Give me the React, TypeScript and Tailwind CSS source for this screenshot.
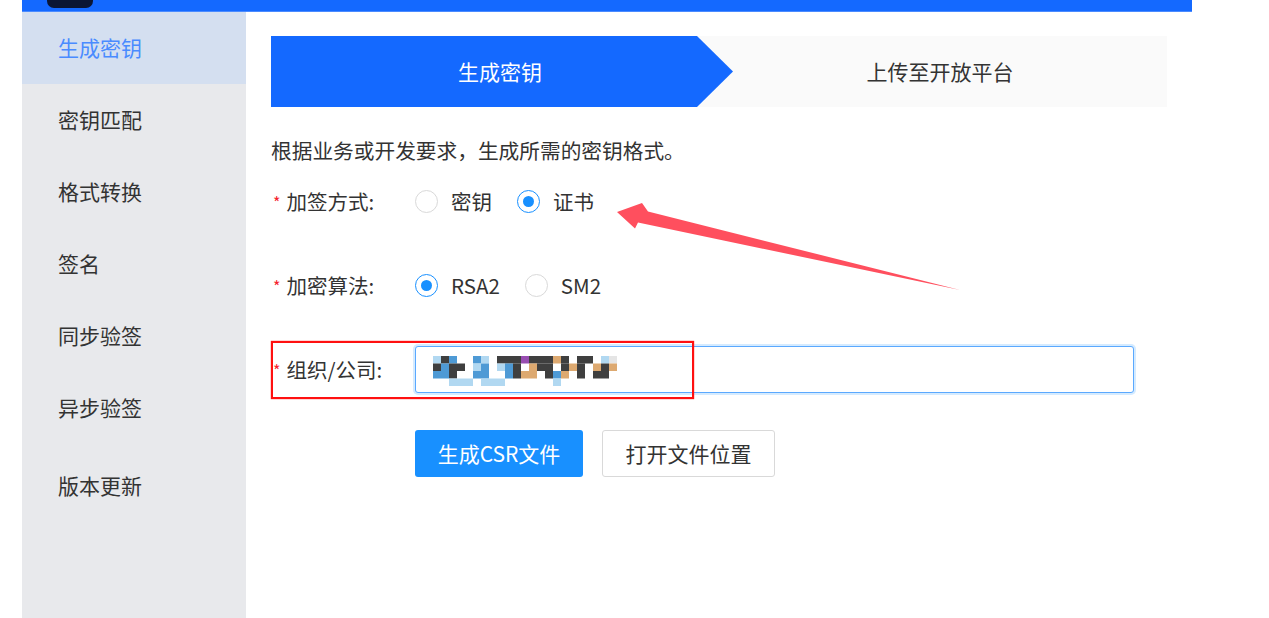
import { useState } from "react";

const menus = ["生成密钥", "密钥匹配", "格式转换", "签名", "同步验签", "异步验签", "版本更新"];

// 打码后的组织名，用小色块模拟
const mosaicRows = [
    "lkb..bl.kkkpkkkok.kk.lw.",
    "kbkk.lb.lbk.okk.kok.oko.",
    "bbk..bb..bkoo.kbo.k.kk..",
    "..lll.lll......l........",
];
const mosaicColors: Record<string, string> = {
    k: "#2a2a2a",
    b: "#3b8fd0",
    l: "#a8d4f0",
    o: "#d9a060",
    p: "#8d3aa8",
    w: "#e2e2e2",
};

function Radio({ checked, label }: { checked: boolean; label: string }) {
    return (
        <label className="flex items-center gap-[13px] cursor-pointer">
            <span
                className={
                    checked
                        ? "w-[23px] h-[23px] rounded-full border border-[#1890ff] bg-white flex items-center justify-center"
                        : "w-[23px] h-[23px] rounded-full border border-[#d9d9d9] bg-white"
                }
            >
                {checked && <span className="w-[11px] h-[11px] rounded-full bg-[#1890ff]" />}
            </span>
            <span className="text-[20.5px] text-[#333]">{label}</span>
        </label>
    );
}

function FormRow({ label, children }: { label: string; children: React.ReactNode }) {
    return (
        <div className="flex items-center h-[47px]">
            <div className="w-[144px] shrink-0 flex items-center text-[20.5px] text-[#333]">
                <span className="text-[#f5222d] text-[16px] ml-[2px] mr-[6px]">*</span>
                {label}
            </div>
            {children}
        </div>
    );
}

export default function App() {
    const [signType, setSignType] = useState("cert");
    const [algo, setAlgo] = useState("RSA2");

    return (
        <div className="relative w-[1269px] h-[618px] overflow-hidden bg-white font-['Microsoft_YaHei','Noto_Sans_CJK_SC',sans-serif]">
            {/* 顶部栏 */}
            <div className="relative ml-[22px] w-[1170px] h-[12px] bg-[#1469ff] border-b border-[#4b8bff]">
                <div className="absolute left-[25px] top-0 w-[46px] h-[8px] rounded-b-[7px] bg-[#0b1633]" />
            </div>

            <div className="flex ml-[22px] h-[606px]">
                {/* 左侧菜单 */}
                <aside className="w-[224px] shrink-0 bg-[#e8e9ec]">
                    {menus.map((m, i) => (
                        <div
                            key={m}
                            className={
                                i === 0
                                    ? "h-[72px] flex items-center pl-[36px] bg-[#d4dff0] text-[#4a8bff] text-[21px]"
                                    : i === 6
                                    ? "h-[72px] mt-[6px] flex items-center pl-[36px] text-[#333] text-[21px]"
                                    : "h-[72px] flex items-center pl-[36px] text-[#333] text-[21px]"
                            }
                        >
                            {m}
                        </div>
                    ))}
                </aside>

                {/* 主体 */}
                <main className="w-[946px] pl-[25px] pt-[24px]">
                    <div className="flex w-[896px] h-[71px] bg-[#fafafa]">
                        <div className="w-[462px] shrink-0 flex items-center justify-center pr-[4px] bg-[#1469ff] text-white text-[21px] [clip-path:polygon(0_0,calc(100%-36px)_0,100%_50%,calc(100%-36px)_100%,0_100%)]">
                            生成密钥
                        </div>
                        <div className="flex-1 flex items-center justify-center pr-[20px] text-[21px] text-[#333]">上传至开放平台</div>
                    </div>

                    <p className="mt-[30px] h-[27px] leading-[27px] text-[20.7px] text-[#333]">根据业务或开发要求，生成所需的密钥格式。</p>

                    <div className="mt-[14px] flex flex-col gap-[37px]">
                        <FormRow label="加签方式:">
                            <div className="flex items-center gap-[25px]">
                                <div onClick={() => setSignType("key")}>
                                    <Radio checked={signType === "key"} label="密钥" />
                                </div>
                                <div onClick={() => setSignType("cert")}>
                                    <Radio checked={signType === "cert"} label="证书" />
                                </div>
                            </div>
                        </FormRow>

                        <FormRow label="加密算法:">
                            <div className="flex items-center gap-[25px]">
                                <div onClick={() => setAlgo("RSA2")}>
                                    <Radio checked={algo === "RSA2"} label="RSA2" />
                                </div>
                                <div onClick={() => setAlgo("SM2")}>
                                    <Radio checked={algo === "SM2"} label="SM2" />
                                </div>
                            </div>
                        </FormRow>

                        <FormRow label="组织/公司:">
                            <div className="w-[719px] h-[47px] flex items-center pl-[17px] rounded-[3px] border border-[#5aa9ff] bg-white shadow-[0_0_0_2px_rgba(24,144,255,0.18)]">
                                <svg width="192" height="32" viewBox="0 0 192 32">
                                    {mosaicRows.map((row, y) =>
                                        row.split("").map((ch, x) =>
                                            ch === "." ? null : (
                                                <rect key={`${x}-${y}`} x={x * 8} y={y * 7.5 + 2} width="8" height="7.5" fill={mosaicColors[ch]} opacity="0.9" />
                                            )
                                        )
                                    )}
                                </svg>
                            </div>
                        </FormRow>

                        <div className="flex items-center gap-[19px] pl-[144px]">
                            <button className="w-[168px] h-[47px] rounded-[3px] bg-[#1890ff] text-white text-[21px]">生成CSR文件</button>
                            <button className="w-[173px] h-[47px] rounded-[3px] border border-[#d9d9d9] bg-white text-[#333] text-[21px]">打开文件位置</button>
                        </div>
                    </div>
                </main>
            </div>

            {/* 截图标注：红框 */}
            <div className="absolute left-[271px] top-[341px] w-[423px] h-[58px] border-[2.5px] border-[#ff1010] shadow-[0_0_1px_#ff1010] pointer-events-none" />

            {/* 截图标注：箭头 */}
            <svg className="absolute inset-0 pointer-events-none" width="1269" height="618" viewBox="0 0 1269 618">
                <polygon points="617,212 642,203 648,211.5 960,290 638,222.5 635,228.5" fill="#ff4f5e" />
            </svg>
        </div>
    );
}
